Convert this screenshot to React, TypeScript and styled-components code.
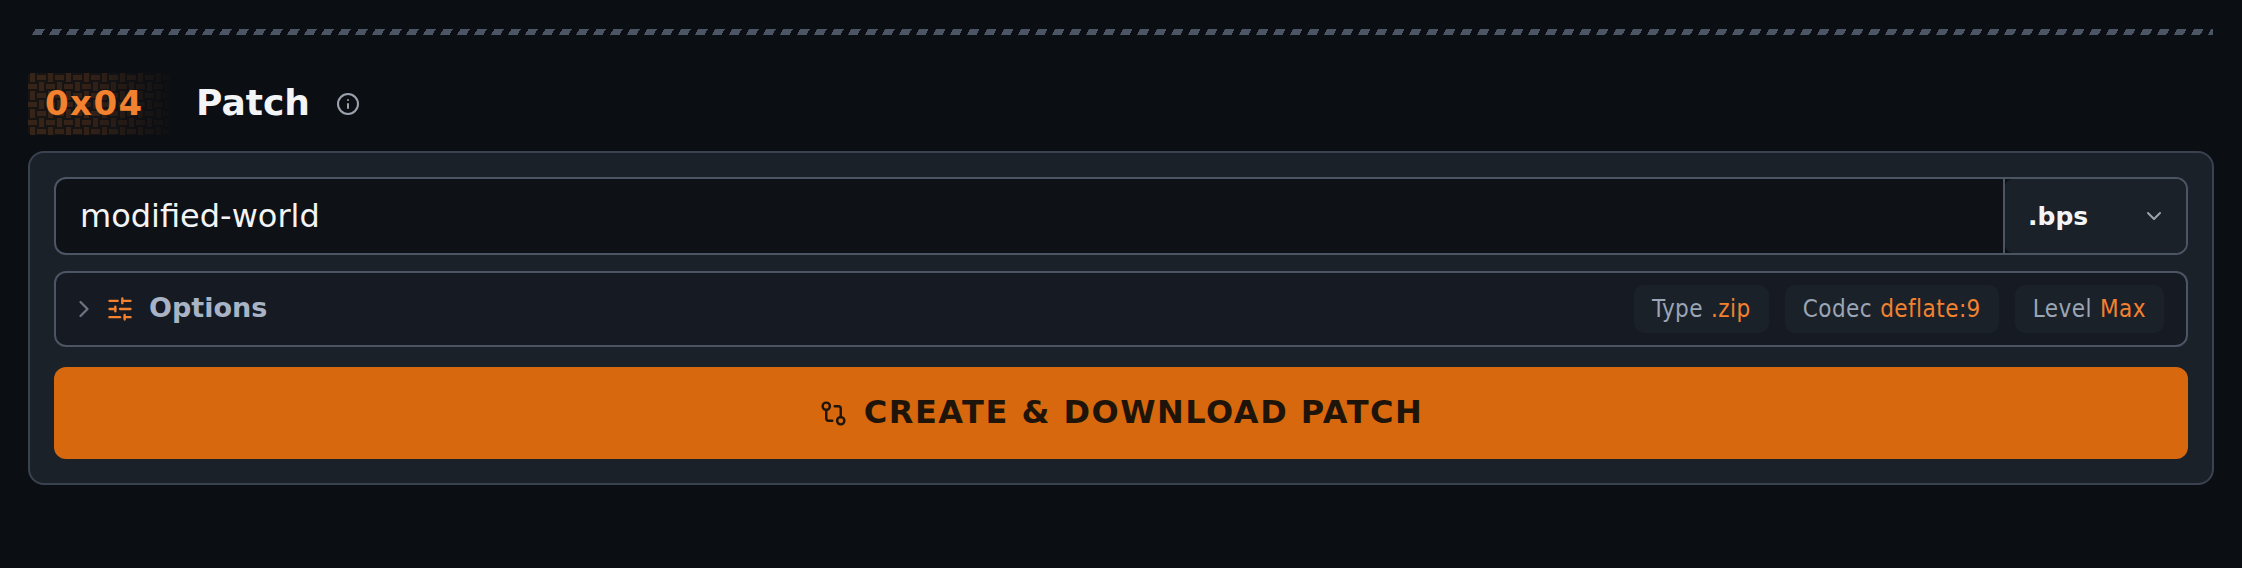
import styled, { createGlobalStyle } from "styled-components";
import { ChevronDown, ChevronRight, GitCompare, Info, SlidersHorizontal } from "lucide-react";

const GlobalStyle = createGlobalStyle`
  html, body {
    margin: 0;
    background: #0b0e13;
    font-family: "DejaVu Sans", sans-serif;
  }
`;

const Page = styled.div`
  padding: 29px 28px 0;
  height: 539px;
`;

const Stripes = styled.div`
  height: 6px;
  margin: 0 1px 0 4px;
  background: repeating-linear-gradient(
    120deg,
    transparent 0 3px,
    #4b5563 3px 11.2px,
    transparent 11.2px 14.72px
  );
`;

const Header = styled.div`
  display: flex;
  align-items: center;
  margin-top: 38px;
  height: 62px;
`;

const Badge = styled.div`
  position: relative;
  width: 142px;
  height: 62px;
  display: flex;
  align-items: center;
`;

const Weave = styled.svg`
  position: absolute;
  inset: 0;
  border-radius: 4px;
`;

const BadgeText = styled.span`
  position: relative;
  margin: 0 0 2px 17px;
  font-size: 34px;
  font-weight: 700;
  letter-spacing: 1.4px;
  color: #f28130;
`;

const Title = styled.h2`
  margin: 0 0 3px 26px;
  font-size: 36px;
  font-weight: 700;
  color: #f3f4f6;
`;

const InfoIcon = styled(Info)`
  margin-left: 26px;
  color: #9ca3af;
`;

const Panel = styled.div`
  margin-top: 16px;
  border: 2px solid #3a4250;
  border-radius: 16px;
  background: #1b2129;
  padding: 24px;
  display: flex;
  flex-direction: column;
  gap: 16px;
`;

const NameRow = styled.div`
  display: flex;
  height: 78px;
  box-sizing: border-box;
  border: 2px solid #4b5563;
  border-radius: 12px;
  background: #0e1116;
  overflow: hidden;
`;

const NameInput = styled.input`
  flex: 1;
  min-width: 0;
  border: 0;
  border-right: 2px solid #4b5563;
  outline: 0;
  background: transparent;
  padding: 0 24px;
  font: 32px "DejaVu Sans", sans-serif;
  color: #f3f4f6;
`;

const Extension = styled.div`
  width: 181px;
  box-sizing: border-box;
  border-radius: 8px;
  background: #1b2129;
  padding: 0 20px 0 23px;
  display: flex;
  align-items: center;
  justify-content: space-between;
  font-size: 25px;
  font-weight: 700;
  color: #f3f4f6;
`;

const ExtensionCaret = styled(ChevronDown)`
  color: #9ca3af;
`;

const OptionsRow = styled.div`
  height: 76px;
  box-sizing: border-box;
  border: 2px solid #4b5563;
  border-radius: 12px;
  background: #161b23;
  padding: 0 22px 0 14px;
  display: flex;
  align-items: center;
`;

const OptionsCaret = styled(ChevronRight)`
  color: #6b7280;
`;

const OptionsIcon = styled(SlidersHorizontal)`
  margin-left: 8px;
  color: #f28130;
`;

const OptionsLabel = styled.span`
  margin: 0 0 4px 15px;
  font-size: 27px;
  font-weight: 700;
  color: #a8b3c5;
`;

const Chips = styled.div`
  margin-left: auto;
  display: flex;
  gap: 16px;
`;

const Chip = styled.div`
  height: 48px;
  padding: 0 18px;
  display: flex;
  align-items: center;
  gap: 8px;
  border-radius: 10px;
  background: #1b2129;
  font-family: "DejaVu Sans Condensed", "DejaVu Sans", sans-serif;
  font-stretch: condensed;
  font-size: 24px;
  letter-spacing: 0.45px;
  color: #9aa5b5;
`;

const ChipValue = styled.span`
  color: #f28130;
`;

const CreateButton = styled.button`
  height: 92px;
  margin-top: 4px;
  border: 0;
  border-radius: 12px;
  background: #d7680e;
  display: flex;
  align-items: center;
  justify-content: center;
  gap: 16px;
  font: 700 32px "DejaVu Sans", sans-serif;
  letter-spacing: 1.5px;
  color: #1f140a;
`;

const CreateLabel = styled.span`
  margin-bottom: 2px;
`;

function BadgeWeave() {
  return (
    <Weave width="142" height="62" aria-hidden="true">
      <defs>
        <pattern id="weave" x="8" width="18" height="18" patternUnits="userSpaceOnUse">
          <rect width="18" height="18" fill="#f28130" fillOpacity="0.28" />
          <rect x="1" y="2" width="9" height="5" fill="#f28130" />
          <rect x="12" y="0" width="5" height="9" fill="#f28130" />
          <rect x="3" y="9" width="5" height="9" fill="#f28130" />
          <rect x="10" y="11" width="8" height="5" fill="#f28130" />
          <rect x="0" y="11" width="1" height="5" fill="#f28130" />
        </pattern>
        <linearGradient id="weave-fade">
          <stop offset="0" stopColor="#fff" stopOpacity="0.2" />
          <stop offset="0.45" stopColor="#fff" stopOpacity="0.17" />
          <stop offset="1" stopColor="#fff" stopOpacity="0.02" />
        </linearGradient>
        <mask id="weave-mask">
          <rect width="142" height="62" fill="url(#weave-fade)" />
        </mask>
      </defs>
      <rect width="142" height="62" fill="url(#weave)" mask="url(#weave-mask)" />
    </Weave>
  );
}

export default function App() {
  return (
    <Page>
      <GlobalStyle />
      <Stripes />
      <Header>
        <Badge>
          <BadgeWeave />
          <BadgeText>0x04</BadgeText>
        </Badge>
        <Title>Patch</Title>
        <InfoIcon size={24} strokeWidth={2} />
      </Header>
      <Panel>
        <NameRow>
          <NameInput defaultValue="modified-world" />
          <Extension>
            .bps
            <ExtensionCaret size={24} />
          </Extension>
        </NameRow>
        <OptionsRow>
          <OptionsCaret size={28} />
          <OptionsIcon size={28} />
          <OptionsLabel>Options</OptionsLabel>
          <Chips>
            <Chip>Type <ChipValue>.zip</ChipValue></Chip>
            <Chip>Codec <ChipValue>deflate:9</ChipValue></Chip>
            <Chip>Level <ChipValue>Max</ChipValue></Chip>
          </Chips>
        </OptionsRow>
        <CreateButton>
          <GitCompare size={29} />
          <CreateLabel>CREATE &amp; DOWNLOAD PATCH</CreateLabel>
        </CreateButton>
      </Panel>
    </Page>
  );
}
